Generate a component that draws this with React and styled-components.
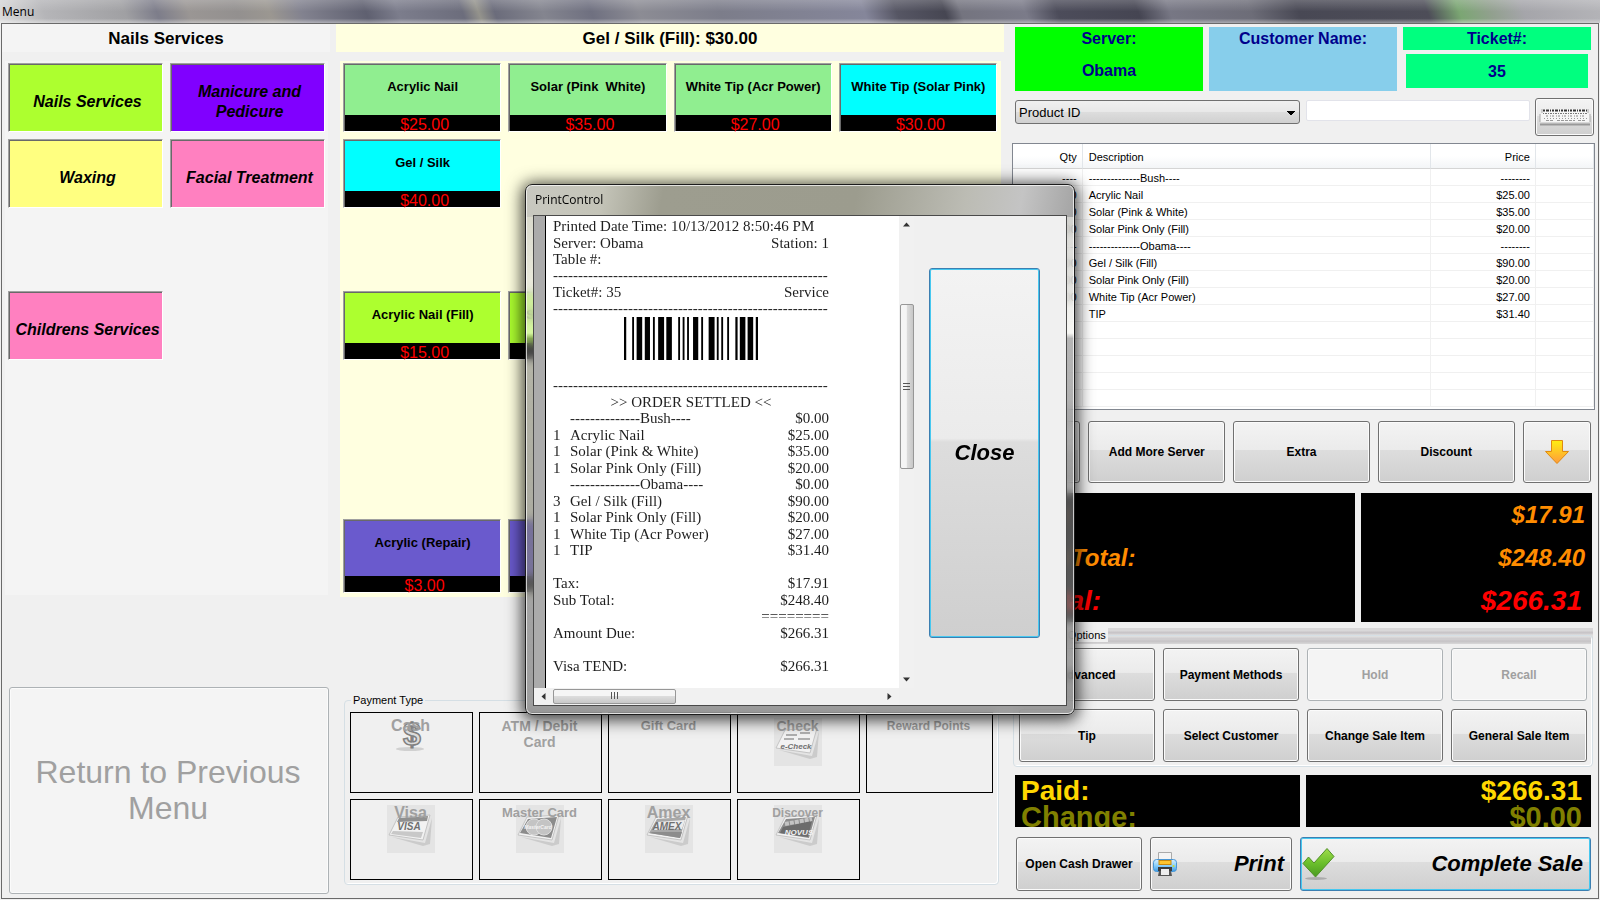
import React from "react";
import styled, { createGlobalStyle, css } from "styled-components";

const GlobalStyle = createGlobalStyle`
  * {
    box-sizing: border-box;
  }
  body {
    margin: 0;
    background: #f0f0f0;
    color: #000;
    font: 11px "Liberation Sans", Arial, sans-serif;
  }
  button, input, select {
    font: inherit;
    color: inherit;
    margin: 0;
  }
`;

// ---------- data ----------
const categories = [
  { name: "Nails Services", color: "#adff2f", row: 1, col: 1 },
  { name: "Manicure and Pedicure", color: "#8000ff", row: 1, col: 2 },
  { name: "Waxing", color: "#ffff80", row: 2, col: 1 },
  { name: "Facial Treatment", color: "#ff80c0", row: 2, col: 2 },
  { name: "Childrens Services", color: "#ff80c0", row: 4, col: 1 },
];

const services = [
  { name: "Acrylic Nail", price: "$25.00", color: "#90ee90", row: 1, col: 1 },
  { name: "Solar (Pink  White)", price: "$35.00", color: "#90ee90", row: 1, col: 2 },
  { name: "White Tip (Acr Power)", price: "$27.00", color: "#90ee90", row: 1, col: 3 },
  { name: "White Tip (Solar Pink)", price: "$30.00", color: "#00ffff", row: 1, col: 4 },
  { name: "Gel / Silk", price: "$40.00", color: "#00ffff", row: 2, col: 1 },
  { name: "Acrylic Nail (Fill)", price: "$15.00", color: "#adff2f", row: 4, col: 1 },
  { name: "Solar Pink Only(Fill)", price: "$20.00", color: "#adff2f", row: 4, col: 2 },
  { name: "Acrylic (Repair)", price: "$3.00", color: "#6a5acd", row: 7, col: 1 },
  { name: "Solar (Repair)", price: "$5.00", color: "#6a5acd", row: 7, col: 2 },
];

const ticketLines = [
  ["----", "--------------Bush----", "--------"],
  ["1.00", "Acrylic Nail", "$25.00"],
  ["1.00", "Solar (Pink & White)", "$35.00"],
  ["1.00", "Solar Pink Only (Fill)", "$20.00"],
  ["----", "--------------Obama----", "--------"],
  ["3.00", "Gel / Silk (Fill)", "$90.00"],
  ["1.00", "Solar Pink Only (Fill)", "$20.00"],
  ["1.00", "White Tip (Acr Power)", "$27.00"],
  ["", "TIP", "$31.40"],
  ["", "", ""],
  ["", "", ""],
  ["", "", ""],
  ["", "", ""],
  ["", "", ""],
];

const DASHES = "-".repeat(55);

const receiptHead = [
  { left: "Printed Date Time: 10/13/2012 8:50:46 PM" },
  { left: "Server: Obama", right: "Station: 1" },
  { left: "Table #:" },
  { left: DASHES },
  { left: "Ticket#: 35", right: "Service" },
  { left: DASHES },
];

const receiptBody = [
  { left: DASHES },
  { center: ">> ORDER SETTLED <<" },
  { qty: "", left: "--------------Bush----", right: "$0.00" },
  { qty: "1", left: "Acrylic Nail", right: "$25.00" },
  { qty: "1", left: "Solar (Pink & White)", right: "$35.00" },
  { qty: "1", left: "Solar Pink Only (Fill)", right: "$20.00" },
  { qty: "", left: "--------------Obama----", right: "$0.00" },
  { qty: "3", left: "Gel / Silk (Fill)", right: "$90.00" },
  { qty: "1", left: "Solar Pink Only (Fill)", right: "$20.00" },
  { qty: "1", left: "White Tip (Acr Power)", right: "$27.00" },
  { qty: "1", left: "TIP", right: "$31.40" },
  {},
  { left: "Tax:", right: "$17.91" },
  { left: "Sub Total:", right: "$248.40" },
  { right: "========" },
  { left: "Amount Due:", right: "$266.31" },
  {},
  { left: "Visa TEND:", right: "$266.31" },
];

// [start, width] of every black bar
const bars = [
  [0, 6], [22, 5], [34, 15], [56, 14], [78, 5], [92, 16], [114, 15],
  [146, 5], [158, 5], [170, 5], [186, 14], [208, 5], [228, 16], [250, 5],
  [262, 5], [278, 5], [300, 6], [312, 15], [333, 15], [355, 6],
];

// ---------- window ----------
const Screen = styled.div`
  min-height: 100vh;
  display: flex;
  flex-direction: column;
  padding-bottom: 1px;
`;

const TitleBar = styled.header`
  height: 23px;
  padding: 0 2px;
  font: 12px/24px "Open Sans", "Noto Sans", sans-serif;
  background:
    linear-gradient(rgba(255, 255, 255, 0.2), rgba(255, 255, 255, 0) 50%, rgba(255, 255, 255, 0) 80%, rgba(255, 255, 255, 0.4)),
    linear-gradient(
      70deg,
      #dcdcdc 0%, #b5b5b8 3%, #a0a0a3 8%, #7d7d8a 10%, #9a9694 12%, #93908f 15%,
      #9b9791 17%, #82828f 19%, #5f6070 23%, #7c7d8c 25%, #6c6d7c 29%, #94938c 30%,
      #6b6c7b 31%, #84858f 34%, #6f7080 37%, #8c8c94 40%, #7c7d8a 45%, #85869a 54%,
      #565664 56%, #464652 59%, #74747f 60%, #7b7b89 64%, #4c4c5a 66%, #454552 71%,
      #777784 73%, #6d6d78 78%, #484854 81%, #4d4d58 89%, #7ba673 91%,
      #92a08f 93%, #a5a5aa 95%, #b4b4b8 100%
    );
`;

const Client = styled.main`
  flex: 1;
  margin: 0 1px;
  border: 1px solid #6a6a6a;
  display: grid;
  grid-template-columns: minmax(0, 332fr) minmax(0, 674fr) minmax(0, 590fr);
`;

const Column = styled.div`
  display: flex;
  flex-direction: column;
`;

const PanelHeader = styled.h2`
  margin: 0 4px 9px ${(props) => (props.$yellow ? 2 : 0)}px;
  height: 28px;
  font-size: 17px;
  line-height: 29px;
  text-align: center;
  background: ${(props) => (props.$yellow ? "#ffffe0" : "#f4f4f4")};
`;

const TileGrid = styled.div`
  display: grid;
  grid-template-columns: repeat(${(props) => props.$cols}, minmax(0, 1fr));
  grid-template-rows: repeat(6, 69px) 74px;
  gap: 7px;
  ${(props) =>
    props.$cols === 2
      ? css`
          margin: 0 6px 0 3px;
          padding: 2px 3px;
          background: #f4f4f4;
        `
      : css`
          margin: 0 7px 0 6px;
          padding: 2px 4px 4px 3px;
          background: #ffffe0;
        `}
`;

const Tile = styled.button`
  grid-row: ${(props) => props.$row};
  grid-column: ${(props) => props.$col};
  padding: 0;
  border: 1px solid;
  border-color: #a0a0a0 #fff #fff #a0a0a0;
  box-shadow: inset 1px 1px #696969;
  background: ${(props) => props.$color};
  font-weight: bold;
`;

const CategoryTile = styled(Tile)`
  padding: 8px 0 0 4px;
  font-size: 16px;
  font-style: italic;
  line-height: 20px;
`;

const ServiceTile = styled(Tile)`
  display: flex;
  flex-direction: column;
  padding: 1px 0 0 1px;
  font-size: 13px;
`;

const TileName = styled.span`
  flex: 1;
  align-self: stretch;
  padding-top: 13px;
  line-height: 18px;
  white-space: pre;
`;

const TilePrice = styled.span`
  align-self: stretch;
  height: 16px;
  padding-left: 4px;
  background: #000;
  color: #f00;
  font-size: 16px;
  font-weight: normal;
  line-height: 19px;
`;

// ---------- buttons and group boxes ----------
const Button = styled.button`
  display: flex;
  align-items: center;
  justify-content: center;
  min-width: 0;
  padding: 0 4px;
  border: 1px solid #707070;
  border-radius: 3px;
  box-shadow: inset 0 0 0 1px #fbfbfb;
  background: linear-gradient(#f3f3f3, #ebebeb 46%, #dddddd 47%, #cfcfcf);
  font-size: 12px;
  font-weight: bold;
  white-space: nowrap;

  ${(props) =>
    props.$focused &&
    css`
      border-color: #3c7fb1;
      box-shadow: inset 0 0 0 1px #46c8f0;
    `}

  &:disabled {
    border-color: #adb2b5;
    background: #f4f4f4;
    color: #a0a0a0;
  }
`;

const BigButton = styled(Button)`
  justify-content: space-between;
  padding: 0 7px 0 1px;
  font-size: 22px;
  font-style: italic;
`;

const ReturnButton = styled(Button)`
  height: 207px;
  margin: 92px 5px 4px 7px;
  padding: 0 6px 2px 4px;
  font-size: 32px;
  font-weight: normal;
  line-height: 36px;
  white-space: normal;
`;

const Group = styled.fieldset`
  min-width: 0;
  margin: 0;
  padding: 5px 5px 4px;
  border: 1px solid #d5dfe5;
  border-radius: 4px;
  box-shadow: inset -1px -1px #fff;
`;

const Legend = styled.legend`
  margin-left: 1px;
  padding: 0 2px;
  height: 14px;
  line-height: 14px;
  background: #f0f0f0;
`;

const PaymentGroup = styled(Group)`
  margin: 96px 9px 0 10px;
`;

const PaymentGrid = styled.div`
  display: grid;
  grid-template-columns: repeat(4, minmax(0, 123fr)) minmax(0, 127fr);
  grid-auto-rows: 81px;
  gap: 6px;
`;

const PayButton = styled.button`
  display: grid;
  justify-items: center;
  align-content: start;
  padding: 5px 14px 0 12px;
  border: 1px solid #000;
  background: #f0f0f0;
  color: #a0a0a0;
  font-size: ${(props) => props.$size}px;
  font-weight: bold;
  line-height: 16px;

  > * {
    grid-area: 1 / 1;
  }
`;

// ---------- right side ----------
const TicketColumn = styled(Column)`
  padding: 3px 4px 0 4px;
`;

const InfoRow = styled.div`
  display: grid;
  grid-template-columns: repeat(3, minmax(0, 1fr));
  gap: 6px;
  margin: 0 3px;
  height: 64px;
  color: #00008b;
  font-size: 16px;
  font-weight: bold;
  text-align: center;
`;

const InfoBox = styled.div`
  padding-top: 1px;
  background: ${(props) => props.$color};
`;

const InfoLine = styled.div`
  padding-top: ${(props) => props.$top}px;
  line-height: 22px;
`;

const TicketBox = styled.div`
  display: flex;
  flex-direction: column;
  gap: 4px;
`;

const TicketNumber = styled.div`
  height: 34px;
  margin: 0 3px;
  line-height: 36px;
  background: #00ff7f;
`;

const TicketLabel = styled.div`
  height: 23px;
  line-height: 24px;
  background: #00ff7f;
`;

const SearchRow = styled.div`
  display: flex;
  align-items: flex-start;
  margin: 7px 0 7px 3px;
`;

const ProductSelect = styled.select`
  flex: 285;
  min-width: 0;
  height: 24px;
  margin-top: 2px;
  padding: 0 3px;
  border: 1px solid #707070;
  border-radius: 3px;
  appearance: none;
  font-size: 13px;
  background:
    linear-gradient(#000, #000) no-repeat right 4px top 10px / 8px 1px,
    linear-gradient(#000, #000) no-repeat right 5px top 11px / 6px 1px,
    linear-gradient(#000, #000) no-repeat right 6px top 12px / 4px 1px,
    linear-gradient(#000, #000) no-repeat right 7px top 13px / 2px 1px,
    linear-gradient(#f0f0f0, #e8e8e8 48%, #dddddd 50%, #d0d0d0);
`;

const ProductInput = styled.input`
  flex: 224;
  min-width: 0;
  height: 21px;
  margin: 2px 5px 0 6px;
  border: 1px solid #e2e3ea;
  border-radius: 2px;
  background: #fff;
`;

const KeyboardButton = styled(Button)`
  width: 59px;
  height: 38px;
  padding: 0;
`;

const TableFrame = styled.div`
  height: 267px;
  margin-right: -1px;
  border: 1px solid #828790;
  background: #fff;
`;

const Table = styled.table`
  width: 100%;
  table-layout: fixed;
  border-collapse: separate;
  border-spacing: 0;
`;

const cell = css`
  padding: 0 5px 0 6px;
  text-align: ${(props) => (props.$right ? "right" : "left")};
  border-right: 1px solid #f0f0f0;
  white-space: nowrap;
`;

const Th = styled.th`
  ${cell}
  width: ${(props) => props.$width};
  height: 25px;
  padding-top: 1px;
  font-weight: normal;
  border-right-color: #e2e6ea;
  border-bottom: 1px solid #d5d5d5;
  background: linear-gradient(#fff 50%, #f3f5f7);
`;

const Td = styled.td`
  ${cell}
  height: 17px;
  padding-top: 2px;
  line-height: 14px;
  border-bottom: 1px solid #f0f0f0;
`;

const ActionRow = styled.div`
  display: grid;
  grid-template-columns: minmax(0, 1fr) repeat(3, minmax(0, 2fr)) minmax(0, 1fr);
  gap: 8px;
  height: 62px;
  margin: 11px 3px 10px 0;
`;

const TotalsRow = styled.div`
  display: grid;
  grid-template-columns: minmax(0, 340fr) minmax(0, 231fr);
  gap: 6px;
  height: 129px;
  margin: 0 2px 6px 3px;
`;

const TotalsBox = styled.div`
  padding: 0 ${(props) => (props.$right ? 7 : 4)}px;
  background: #000;
  color: #ff8c00;
  font-size: 24px;
  font-weight: bold;
  font-style: italic;
  line-height: 43px;
  text-align: ${(props) => (props.$right ? "right" : "left")};
`;

const GrandTotal = styled.div`
  padding: 0 3px 0 7px;
  color: #f00;
  font-size: 28px;
`;

const OptionsBand = styled.div`
  margin: 0 1px 8px;
  background:
    linear-gradient(
      #d9d8d9 0 3px, #c8c5c8 4px 5px, #dedede 7px 9px, #cfcdcf 10px 12px, #c4c1c4 13px, #d8d8d8 16px
    ) no-repeat top / 100% 16px;
`;

const OptionsGrid = styled.div`
  display: grid;
  grid-template-columns: repeat(4, minmax(0, 1fr));
  grid-auto-rows: 53px;
  gap: 8px;
  padding-top: 1px;
`;

const PaidRow = styled.div`
  display: grid;
  grid-template-columns: repeat(2, minmax(0, 1fr));
  gap: 6px;
  height: 52px;
  margin: 0 3px 10px;
`;

const PaidBox = styled.div`
  padding: 2px ${(props) => (props.$right ? 9 : 6)}px;
  overflow: hidden;
  background: #000;
  color: #ffd700;
  font-size: 28px;
  font-weight: bold;
  line-height: 27px;
  text-align: ${(props) => (props.$right ? "right" : "left")};
`;

const Change = styled.div`
  color: #808000;
  font-size: 29px;
`;

const FinishRow = styled.div`
  display: grid;
  grid-template-columns: minmax(0, 126fr) minmax(0, 142fr) minmax(0, 291fr);
  gap: 8px;
  height: 54px;
  margin: 0 3px 0 4px;
`;

// ---------- print dialog ----------
const Overlay = styled.div`
  position: fixed;
  inset: 0;
  display: flex;
  align-items: center;
  justify-content: center;
  padding-bottom: 2px;
`;

const Dialog = styled.section`
  width: 550px;
  padding: 0 7px 8px;
  border: 1px solid #1c1c1c;
  border-radius: 7px;
  box-shadow: inset 0 0 0 1px rgba(255, 255, 255, 0.7), 0 2px 16px 3px rgba(0, 0, 0, 0.75);
  background:
    linear-gradient(100deg, #c8c8c0 0%, #c4c4b8 14%, #9d9d8f 25%, #9c9c8e 60%, #bcbcb4 80%, #c4c4c4 90%, #a4a4a4 100%)
      no-repeat top / 100% 32px,
    linear-gradient(rgba(190, 190, 185, 0.7), rgba(240, 240, 235, 0.6) 28%, rgba(120, 120, 120, 0.55) 29%, rgba(130, 130, 130, 0.75));
  backdrop-filter: blur(4px);
`;

const DialogTitle = styled.h1`
  margin: 0;
  height: 30px;
  padding-left: 2px;
  font: 12px/29px "Open Sans", "Noto Sans", sans-serif;
`;

const DialogBody = styled.div`
  display: flex;
  height: 491px;
  border: 1px solid #4a4a4a;
  background: #f0f0f0;
`;

const Preview = styled.div`
  width: 380px;
  display: grid;
  grid-template-columns: 1fr 15px;
  grid-template-rows: 1fr 17px;
`;

const Paper = styled.div`
  min-height: 0;
  padding: 3px 70px 0 8px;
  border-left: 11px solid #ababab;
  box-shadow: inset 1px 0 #000;
  background: #fff;
  color: #1e1e1e;
  font: 15px "Liberation Serif", "Times New Roman", serif;
`;

const Lines = styled.div`
  display: grid;
  grid-auto-rows: minmax(0, 1fr);
  height: ${(props) => props.$height}px;
`;

const Line = styled.div`
  display: flex;
  align-items: center;
  justify-content: ${(props) => (props.$center ? "center" : "flex-start")};
  min-height: 0;
  white-space: nowrap;
`;

const LineQty = styled.span`
  width: 17px;
`;

const LineRight = styled.span`
  margin-left: auto;
`;

const Barcode = styled.svg`
  display: block;
  width: 134px;
  height: 43px;
  margin: 0 auto 18px;
`;

const ScrollTrack = styled.div`
  display: flex;
  flex-direction: ${(props) => (props.$vertical ? "column" : "row")};
  align-items: center;
  justify-content: space-between;
  padding: ${(props) => (props.$vertical ? "5px 0" : "0 6px")};
  background: #f1f1f1;
`;

const Thumb = styled.div`
  display: flex;
  align-items: center;
  justify-content: center;
  border: 1px solid #979797;
  border-radius: 2px;
  ${(props) =>
    props.$vertical
      ? css`
          width: 14px;
          height: 165px;
          margin: 76px 0 auto;
          background: linear-gradient(90deg, #f5f5f5 45%, #dcdcdc 50%, #c8c8c8);
        `
      : css`
          width: 123px;
          height: 15px;
          margin: 0 auto 0 6px;
          background: linear-gradient(#f5f5f5 45%, #dcdcdc 50%, #c8c8c8);
        `}
`;

const CloseButton = styled(Button)`
  width: 111px;
  height: 370px;
  margin: 52px 0 0 15px;
  font-size: 22px;
  font-style: italic;
`;

// ---------- icons ----------
function Arrow({ up }) {
  return (
    <svg width="26" height="26" viewBox="0 0 26 26" aria-hidden="true">
      <defs>
        <linearGradient id="arrowFill" x1="0" y1="0" x2="0" y2="1">
          <stop offset="0" stopColor="#ffee10" />
          <stop offset="1" stopColor="#ff9a3c" />
        </linearGradient>
      </defs>
      <path
        d="M7.500 1.500h11v11h6L13 24.500 1.500 12.500h6z"
        transform={up ? "rotate(180 13 13)" : undefined}
        fill="url(#arrowFill)"
        stroke="#e08a10"
      />
    </svg>
  );
}

function KeyboardIcon() {
  return (
    <svg width="52" height="20" viewBox="0 0 52 20" aria-hidden="true">
      <path d="M3 2h46v4l2 2v7H1V8l2-2z" fill="#f6f6f6" />
      <path d="M3 2v4M49 2v4M1 7v8M51 7v8" stroke="#aaa" />
      <path d="M4 3.500h44" stroke="#333" strokeWidth="2" strokeDasharray="2 1 3 1 1 1" />
      <path d="M4 6.500h44" stroke="#777" strokeDasharray="1 1 2 1" />
      <path d="M7 9h40" stroke="#888" strokeDasharray="2 2 1 1" />
      <path d="M5 11.500h44" stroke="#999" strokeDasharray="1 2" />
      <path d="M7 13.500h8m3 0h18m3 0h8" stroke="#999" strokeDasharray="3 1" />
      <path d="M1 17.500h50" stroke="#999" strokeWidth="2" />
    </svg>
  );
}

function PrinterIcon() {
  return (
    <svg width="26" height="26" viewBox="0 0 26 26" aria-hidden="true">
      <defs>
        <linearGradient id="printerBody" x1="0" y1="0" x2="0" y2="1">
          <stop offset="0" stopColor="#d8f0ff" />
          <stop offset="0.5" stopColor="#8cd0fa" />
          <stop offset="1" stopColor="#3c9ce8" />
        </linearGradient>
      </defs>
      <path d="M6.500 1.500h13v9h-13z" fill="#f4f4f4" stroke="#aaa" />
      <rect x="1.500" y="8.500" width="23" height="12" rx="3" fill="url(#printerBody)" stroke="#4a96d4" />
      <rect x="7" y="9.500" width="12" height="4" fill="#ffc52e" stroke="#c88a10" />
      <circle cx="21.500" cy="15" r="1" fill="#d4e020" />
      <path d="M6 16h14v4H6z" fill="#3c3c3c" />
      <path d="M7 20h12l1 5H6z" fill="#555" />
      <path d="M9 18h8v6H9z" fill="#eee" />
    </svg>
  );
}

function CheckIcon() {
  return (
    <svg width="33" height="34" viewBox="0 0 33 34" aria-hidden="true">
      <defs>
        <linearGradient id="checkFill" x1="0" y1="0" x2="0" y2="1">
          <stop offset="0" stopColor="#a0dc4c" />
          <stop offset="0.5" stopColor="#6cc02c" />
          <stop offset="1" stopColor="#4a9a20" />
        </linearGradient>
      </defs>
      <ellipse cx="14" cy="31.500" rx="11" ry="1.500" fill="#999" opacity="0.7" />
      <path
        d="M1 16.500l5.500-6.500 5.500 6L25 1.500l7 8L13.500 30z"
        fill="url(#checkFill)"
        stroke="#4f8f28"
        strokeLinejoin="round"
      />
    </svg>
  );
}

function DollarIcon() {
  return (
    <svg width="32" height="36" viewBox="0 0 32 36" aria-hidden="true">
      <ellipse cx="15" cy="31" rx="14" ry="2" fill="#d0d0d0" />
      <text
        x="17" y="27" textAnchor="middle" fontFamily="Liberation Sans" fontWeight="bold"
        fontSize="32" fill="#dcdcdc" stroke="#808080" strokeWidth="1.500"
      >
        $
      </text>
    </svg>
  );
}

// greyed-out card picture, shared by every card type
function CardIcon({ kind }) {
  const dark = kind === "MasterCard" || kind === "AMEX" || kind === "NOVUS";
  return (
    <svg width="48" height="48" viewBox="0 0 48 48" aria-hidden="true">
      <rect width="48" height="48" fill="#e4e4e4" />
      <path d="M5 32l33 6 7-25-2 26-7 2z" fill="#bbb" opacity="0.6" />
      <path d="M11 12l32-2-7 25-34-5z" fill="#f2f2f2" stroke="#c4c4c4" />
      {kind === "VISA" && <path d="M12 13l29-2-1 5-30 1z" fill="#909090" />}
      {kind === "VISA" && <path d="M6 26l30 1-2 6-30-4z" fill="#c8c8c8" />}
      {dark && <path d="M12 14l29-2-6 21-31-5z" fill={kind === "AMEX" ? "#a8a8a8" : "#8c8c8c"} />}
      {kind === "MasterCard" && (
        <g fill="#c4c4c4" stroke="#ddd">
          <circle cx="18" cy="22" r="8" />
          <circle cx="28" cy="22" r="8" />
        </g>
      )}
      {kind === "AMEX" && <path d="M12 17l28-2-3 9-29 1z" fill="#ececec" />}
      {kind === "AMEX" && <path d="M7 27l30 0-2 6-31-5z" fill="#8c8c8c" />}
      {kind === "NOVUS" && <path d="M9 22l29-6-4 16-28-4z" fill="#6c6c6c" />}
      {kind === "NOVUS" && <path d="M11 19l27-5" stroke="#c4c4c4" strokeWidth="4" strokeDasharray="4 1" />}
      {kind === "e-Check" && (
        <path d="M12 17h11m3-2h10M10 21h10m4 0h12" stroke="#999" strokeWidth="1.500" fill="none" />
      )}
      <text
        x={kind === "NOVUS" ? 25 : 22}
        y={kind === "e-Check" ? 31 : kind === "MasterCard" ? 24 : kind === "NOVUS" ? 30 : 25}
        textAnchor="middle"
        fontFamily="Liberation Sans"
        fontWeight="bold"
        fontStyle="italic"
        fontSize={kind === "VISA" || kind === "AMEX" ? 10 : kind === "MasterCard" ? 5 : 8}
        fill={kind === "MasterCard" || kind === "NOVUS" ? "#f4f4f4" : "#707070"}
      >
        {kind}
      </text>
    </svg>
  );
}

function ScrollArrow({ rotate }) {
  return (
    <svg width="7" height="7" viewBox="0 0 7 7" aria-hidden="true">
      <path d="M0 5.500L3.500 1.500 7 5.500z" fill="#333" transform={`rotate(${rotate} 3.500 3.500)`} />
    </svg>
  );
}

function Grip({ vertical }) {
  return (
    <svg width="8" height="8" viewBox="0 0 8 8" aria-hidden="true">
      <path
        d="M0 1.500h7M0 4.500h7M0 7.500h7"
        stroke="#555"
        transform={vertical ? undefined : "rotate(90 4 4)"}
      />
    </svg>
  );
}

// ---------- parts ----------
const payments = [
  { name: "Cash", size: 16, icon: <DollarIcon /> },
  { name: "ATM / Debit Card", size: 14 },
  { name: "Gift Card", size: 13 },
  { name: "Check", size: 14, icon: <CardIcon kind="e-Check" /> },
  { name: "Reward Points", size: 12 },
  { name: "Visa", size: 16, icon: <CardIcon kind="VISA" /> },
  { name: "Master Card", size: 13, icon: <CardIcon kind="MasterCard" /> },
  { name: "Amex", size: 16, icon: <CardIcon kind="AMEX" /> },
  { name: "Discover", size: 12, icon: <CardIcon kind="NOVUS" /> },
];

function ReceiptLines({ lines, height }) {
  return (
    <Lines $height={height}>
      {lines.map((line, i) => (
        <Line key={i} $center={line.center}>
          {line.qty !== undefined && <LineQty>{line.qty}</LineQty>}
          {line.center || <span>{line.left}</span>}
          {line.right && <LineRight>{line.right}</LineRight>}
        </Line>
      ))}
    </Lines>
  );
}

function PrintDialog() {
  return (
    <Overlay>
      <Dialog role="dialog" aria-labelledby="print-title">
        <DialogTitle id="print-title">PrintControl</DialogTitle>
        <DialogBody>
          <Preview>
            <Paper>
              <ReceiptLines lines={receiptHead} height={98} />
              <Barcode viewBox="0 0 361 43" preserveAspectRatio="none">
                {bars.map(([x, w]) => (
                  <rect key={x} x={x} width={w} height="43" />
                ))}
              </Barcode>
              <ReceiptLines lines={receiptBody} height={297} />
            </Paper>
            <ScrollTrack $vertical>
              <ScrollArrow rotate={0} />
              <Thumb $vertical>
                <Grip vertical />
              </Thumb>
              <ScrollArrow rotate={180} />
            </ScrollTrack>
            <ScrollTrack>
              <ScrollArrow rotate={270} />
              <Thumb>
                <Grip />
              </Thumb>
              <ScrollArrow rotate={90} />
            </ScrollTrack>
          </Preview>
          <CloseButton $focused>Close</CloseButton>
        </DialogBody>
      </Dialog>
    </Overlay>
  );
}

function TicketTable() {
  return (
    <TableFrame>
      <Table>
        <thead>
          <tr>
            <Th $width="12%" $right>Qty</Th>
            <Th $width="60%">Description</Th>
            <Th $width="18%" $right>Price</Th>
            <Th $width="10%" />
          </tr>
        </thead>
        <tbody>
          {ticketLines.map(([qty, name, price], i) => (
            <tr key={i}>
              <Td $right>{qty}</Td>
              <Td>{name}</Td>
              <Td $right>{price}</Td>
              <Td />
            </tr>
          ))}
        </tbody>
      </Table>
    </TableFrame>
  );
}

function App() {
  return (
    <Screen>
      <GlobalStyle />
      <TitleBar>Menu</TitleBar>
      <Client>
        <Column>
          <PanelHeader>Nails Services</PanelHeader>
          <TileGrid $cols={2}>
            {categories.map((c) => (
              <CategoryTile key={c.name} $color={c.color} $row={c.row} $col={c.col}>
                {c.name}
              </CategoryTile>
            ))}
          </TileGrid>
          <ReturnButton disabled>Return to Previous Menu</ReturnButton>
        </Column>

        <Column>
          <PanelHeader $yellow>Gel / Silk (Fill): $30.00</PanelHeader>
          <TileGrid $cols={4}>
            {services.map((s) => (
              <ServiceTile key={s.name} $color={s.color} $row={s.row} $col={s.col}>
                <TileName>{s.name}</TileName>
                <TilePrice>{s.price}</TilePrice>
              </ServiceTile>
            ))}
          </TileGrid>
          <PaymentGroup>
            <Legend>Payment Type</Legend>
            <PaymentGrid>
              {payments.map((p) => (
                <PayButton key={p.name} $size={p.size} disabled>
                  {p.icon}
                  <span>{p.name}</span>
                </PayButton>
              ))}
            </PaymentGrid>
          </PaymentGroup>
        </Column>

        <TicketColumn>
          <InfoRow>
            <InfoBox $color="#00ff00">
              <InfoLine>Server:</InfoLine>
              <InfoLine $top={10}>Obama</InfoLine>
            </InfoBox>
            <InfoBox $color="#87ceeb">
              <InfoLine>Customer Name:</InfoLine>
            </InfoBox>
            <TicketBox>
              <TicketLabel>Ticket#:</TicketLabel>
              <TicketNumber>35</TicketNumber>
            </TicketBox>
          </InfoRow>
          <SearchRow>
            <ProductSelect aria-label="Search by">
              <option>Product ID</option>
            </ProductSelect>
            <ProductInput aria-label="Product" />
            <KeyboardButton aria-label="Keyboard">
              <KeyboardIcon />
            </KeyboardButton>
          </SearchRow>
          <TicketTable />
          <ActionRow>
            <Button aria-label="Up">
              <Arrow up />
            </Button>
            <Button>Add More Server</Button>
            <Button>Extra</Button>
            <Button>Discount</Button>
            <Button aria-label="Down">
              <Arrow />
            </Button>
          </ActionRow>
          <TotalsRow>
            <TotalsBox>
              <div>Tax:</div>
              <div>Sub Total:</div>
              <GrandTotal>Total:</GrandTotal>
            </TotalsBox>
            <TotalsBox $right>
              <div>$17.91</div>
              <div>$248.40</div>
              <GrandTotal>$266.31</GrandTotal>
            </TotalsBox>
          </TotalsRow>
          <OptionsBand>
            <Group>
              <Legend>Advance Options</Legend>
              <OptionsGrid>
                <Button>Advanced</Button>
                <Button>Payment Methods</Button>
                <Button disabled>Hold</Button>
                <Button disabled>Recall</Button>
                <Button>Tip</Button>
                <Button>Select Customer</Button>
                <Button>Change Sale Item</Button>
                <Button>General Sale Item</Button>
              </OptionsGrid>
            </Group>
          </OptionsBand>
          <PaidRow>
            <PaidBox>
              <div>Paid:</div>
              <Change>Change:</Change>
            </PaidBox>
            <PaidBox $right>
              <div>$266.31</div>
              <Change>$0.00</Change>
            </PaidBox>
          </PaidRow>
          <FinishRow>
            <Button>Open Cash Drawer</Button>
            <BigButton>
              <PrinterIcon />
              Print
            </BigButton>
            <BigButton $focused>
              <CheckIcon />
              Complete Sale
            </BigButton>
          </FinishRow>
        </TicketColumn>
      </Client>
      <PrintDialog />
    </Screen>
  );
}

export default App;
